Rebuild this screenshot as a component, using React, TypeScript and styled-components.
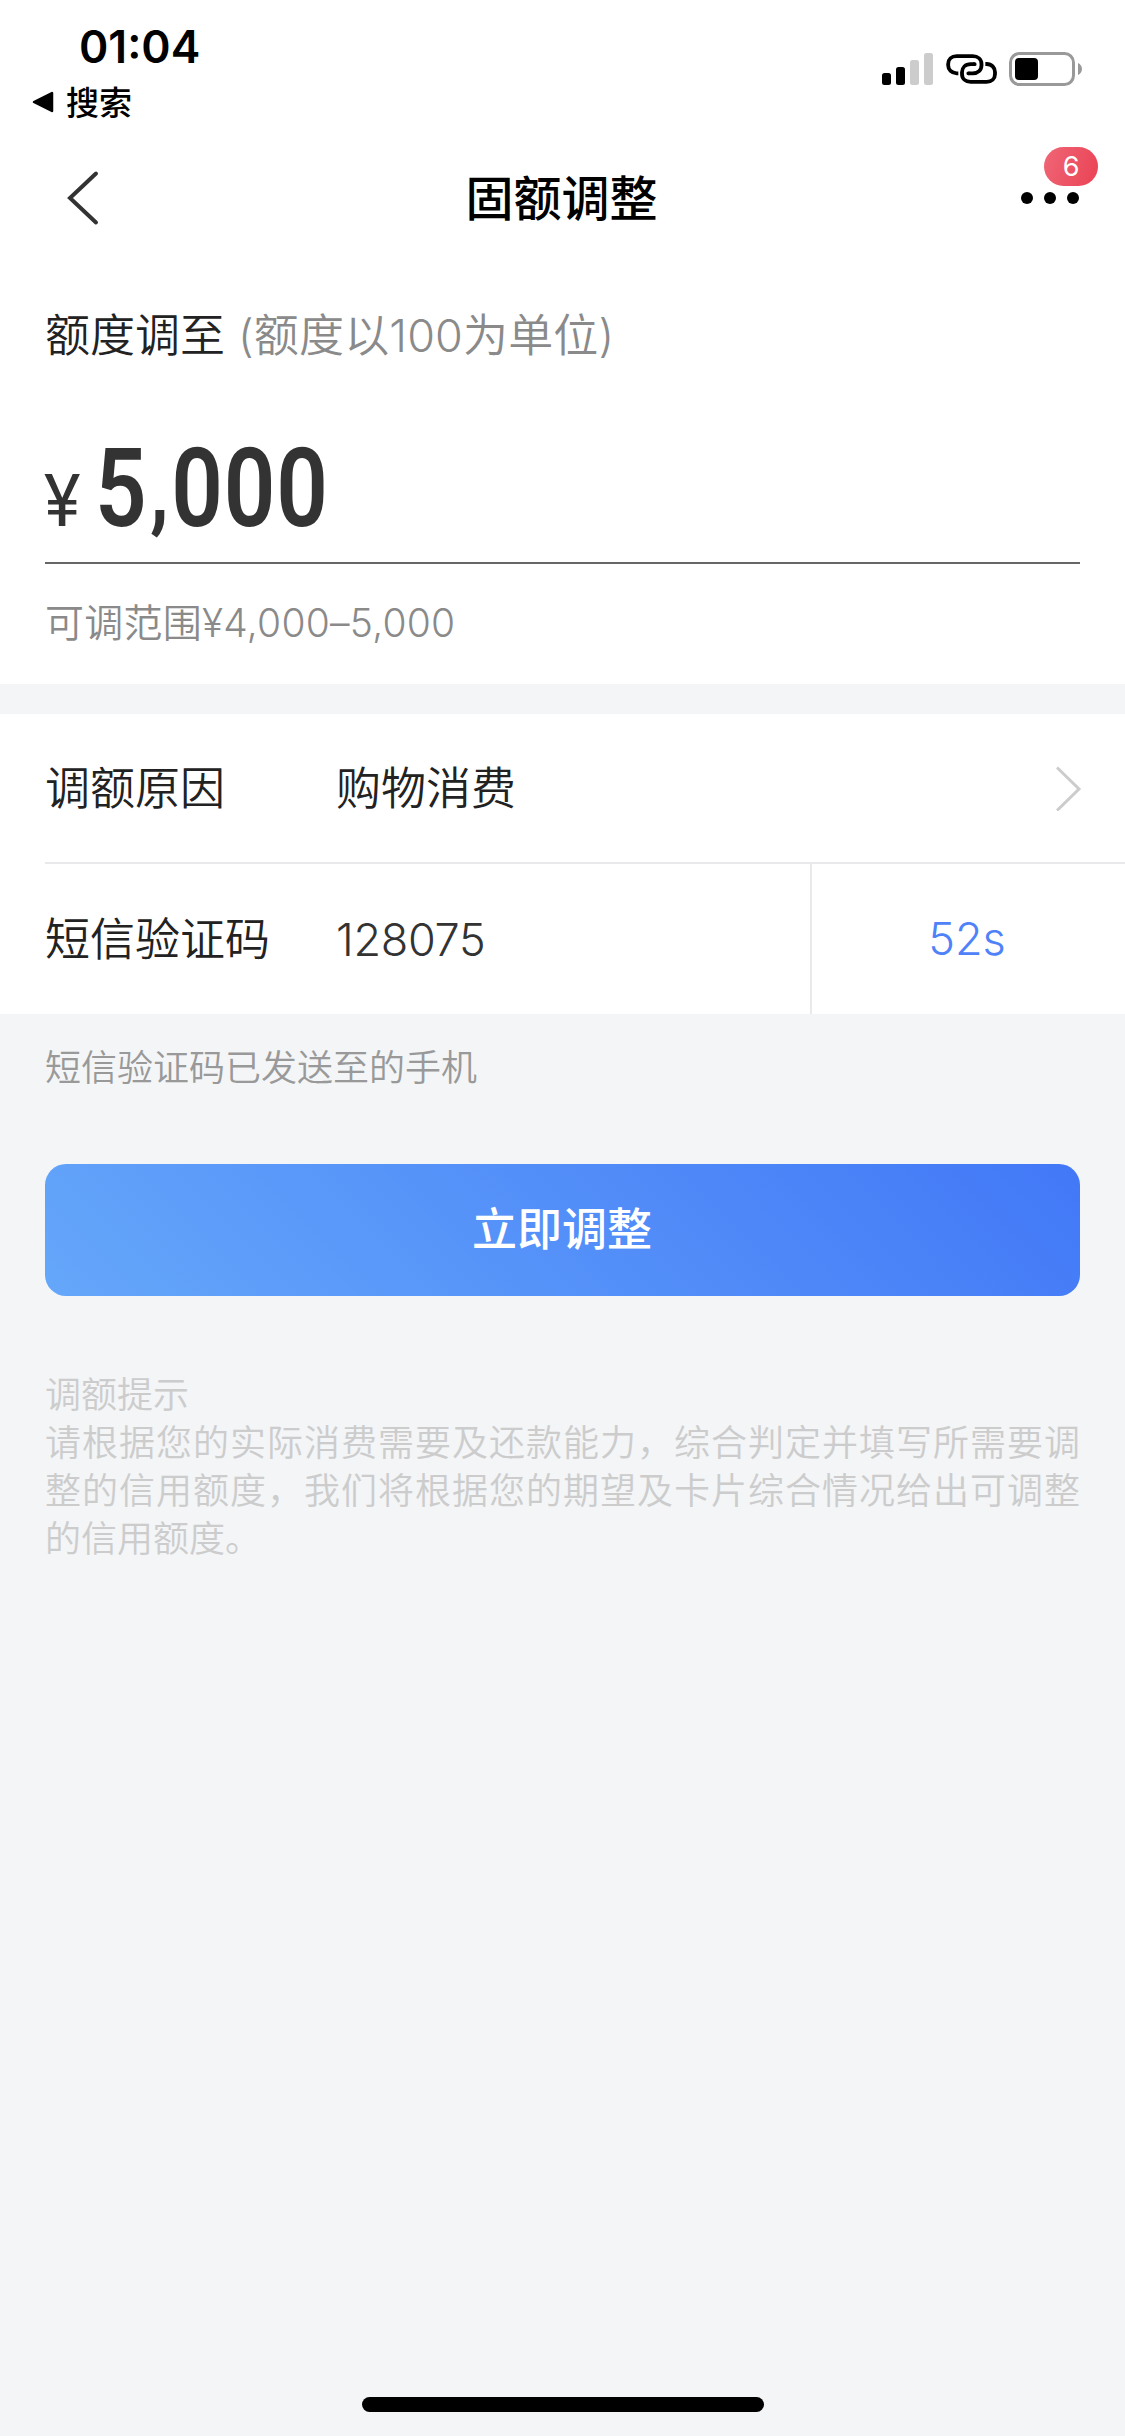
import React from "react";
import styled, { createGlobalStyle } from "styled-components";

const GlobalStyle = createGlobalStyle`
  * { box-sizing: border-box; }
  body {
    margin: 0;
    background: #f3f5f7;
    font-family: Inter, "Noto Sans CJK SC", sans-serif;
    color: #222;
  }
`;

const Screen = styled.main`
  display: flex;
  flex-direction: column;
  width: 1125px;
  height: 2436px;
  background: #f3f5f7;
  overflow: hidden;
`;

const StatusBar = styled.header`
  display: flex;
  justify-content: space-between;
  height: 132px;
  padding: 25px 42px 0 32px;
  background: #fff;
  color: #000;
`;

const StatusLeft = styled.div`
  display: flex;
  flex-direction: column;
`;

const Clock = styled.div`
  padding-left: 47px;
  font-size: 44.5px;
  font-weight: 600;
  line-height: 44px;
`;

const BackToApp = styled.div`
  display: flex;
  align-items: center;
  gap: 12px;
  height: 40px;
  margin-top: 13px;
  font: 500 33px/38px "Noto Sans CJK SC", sans-serif;
`;

const BackToAppLabel = styled.span`
  margin-bottom: 3px;
`;

const StatusIcons = styled.div`
  display: flex;
  align-items: flex-start;
  gap: 12px;
  padding-top: 27px;
`;

const NavBar = styled.nav`
  display: grid;
  grid-template-columns: 1fr auto 1fr;
  align-items: center;
  height: 132px;
  padding: 0 46px 0 66px;
  background: #fff;
`;

const BackButton = styled.button`
  display: flex;
  width: 34px;
  padding: 0;
  border: 0;
  background: none;
`;

const Title = styled.h1`
  margin: 0 0 6px -22px;
  font: 500 48px/72px "Noto Sans CJK SC", sans-serif;
  color: #000;
`;

const MoreButton = styled.div`
  position: relative;
  display: flex;
  justify-self: end;
  gap: 11px;
`;

const Dot = styled.i`
  width: 12px;
  height: 12px;
  border-radius: 50%;
  background: #000;
`;

const Badge = styled.span`
  position: absolute;
  left: 23px;
  top: -45px;
  width: 54px;
  height: 39px;
  border-radius: 20px;
  background: linear-gradient(110deg, #ef6676, #ea4355);
  color: #fff;
  font-size: 27px;
  line-height: 39px;
  text-align: center;
`;

const AmountPanel = styled.section`
  display: flex;
  flex-direction: column;
  height: 420px;
  padding: 41px 45px 0;
  background: #fff;
`;

const Text = styled.span<{ $size: number; $color?: string; $spacing?: number }>`
  font-size: ${(p) => p.$size}px;
  line-height: ${(p) => Math.round(p.$size * 1.35)}px;
  color: ${(p) => p.$color ?? "#222"};
  letter-spacing: ${(p) => p.$spacing ?? 0}px;
  font-weight: 350;
  white-space: pre;
`;

const AmountLabel = styled.div`
  display: flex;
  align-items: center;
  gap: 13px;
  height: 61px;
`;

const AmountField = styled.div`
  display: flex;
  align-items: baseline;
  height: 198px;
  padding-top: 63px;
  border-bottom: 2px solid #666;
  font-family: Roboto, sans-serif;
  color: #333;
`;

const Currency = styled.span`
  width: 51px;
  margin-left: -1px;
  font-size: 73px;
  font-weight: 400;
  transform: scaleX(0.95);
  transform-origin: left;
`;

const Amount = styled.span`
  font-size: 109px;
  line-height: 120px;
  font-weight: 600;
  letter-spacing: 1px;
  transform: scaleX(0.83);
  transform-origin: left;
`;

const Comma = styled.span`
  font-size: 96px;
  line-height: 1;
  vertical-align: 5px;
  padding: 0 2px 0 3px;
`;

const RangeRow = styled.div`
  display: flex;
  align-items: center;
  height: 116px;
`;

const Form = styled.section`
  display: flex;
  flex-direction: column;
  height: 300px;
  margin-top: 30px;
  padding-left: 45px;
  background: #fff;
`;

const FormRow = styled.div`
  display: flex;
  align-items: center;
  height: 150px;
  &:first-child {
    padding-right: 43px;
    border-bottom: 2px solid #e9e9eb;
  }
`;

const FormLabel = styled.div`
  width: 291px;
`;

const FormValue = styled.div`
  flex: 1;
`;

const Countdown = styled.div`
  display: flex;
  align-items: center;
  justify-content: center;
  width: 315px;
  height: 150px;
  padding: 0 3px 2px 0;
  border-left: 2px solid #e9e9eb;
`;

const SentNote = styled.div`
  display: flex;
  align-items: center;
  height: 108px;
  padding-left: 45px;
`;

const SubmitButton = styled.button`
  height: 132px;
  margin: 42px 45px 0;
  padding: 0 1px 6px 0;
  border: 0;
  border-radius: 21px;
  background: linear-gradient(45deg, #65a7fa, #4278f7);
  color: #fff;
  font: 500 45px/126px "Noto Sans CJK SC", sans-serif;
`;

const Tips = styled.section`
  margin: 72px 45px 0;
  font: 350 36px/48px "Noto Sans CJK SC", sans-serif;
  color: #ccc;
`;

const TipsTitle = styled.h2`
  margin: 0;
  font: inherit;
`;

const TipsBody = styled.p`
  margin: 0;
  text-align: justify;
`;

const HomeIndicator = styled.div`
  width: 402px;
  height: 15px;
  margin: auto auto 24px 362px;
  border-radius: 8px;
  background: #000;
`;

const SignalIcon = () => (
  <svg width="52" height="33" viewBox="0 0 52 33">
    <rect x="0" y="21" width="9" height="12" rx="2.5" fill="#000" />
    <rect x="14" y="15" width="9" height="18" rx="2.5" fill="#000" />
    <rect x="28" y="8" width="9" height="25" rx="2.5" fill="#ccc" />
    <rect x="42" y="1" width="9" height="32" rx="2.5" fill="#ccc" />
  </svg>
);

const LinkIcon = () => (
  <svg width="51" height="34" viewBox="317 97 153 102" fill="none" stroke="#000" strokeWidth="11.5">
    <path d="M354 161H349C334 161 323.500 150 323.500 137V133C323.500 119 333 109.500 349 109.500H397C413 109.500 423.500 119 423.500 133V137C423.500 151 413 161 397 161H385" />
    <path d="M435 133H439C454 133 464 144 464 158V163C464 177 454 186.500 439 186.500H391C375 186.500 365 177 365 163V158C365 144 375 133.500 391 133.500H403" />
    <path d="M385 161H384M402 133.500H403" strokeLinecap="round" />
  </svg>
);

const BatteryIcon = () => (
  <svg width="74" height="34" viewBox="0 0 74 34">
    <rect x="1.500" y="1.500" width="63" height="31" rx="9" fill="#fff" stroke="#999" strokeWidth="3" />
    <rect x="6" y="6" width="23" height="22" rx="4" fill="#000" />
    <path d="M69 11C71.500 12 73 14.500 73 17S71.500 22 69 23Z" fill="#999" />
  </svg>
);

export default function App() {
  return (
    <Screen>
      <GlobalStyle />
      <StatusBar>
        <StatusLeft>
          <Clock>01:04</Clock>
          <BackToApp>
            <svg width="22" height="22" viewBox="0 0 22 22">
              <path d="M2 11L20 2V20Z" fill="#000" stroke="#000" strokeWidth="2.500" strokeLinejoin="round" />
            </svg>
            <BackToAppLabel>搜索</BackToAppLabel>
          </BackToApp>
        </StatusLeft>
        <StatusIcons>
          <SignalIcon />
          <LinkIcon />
          <BatteryIcon />
        </StatusIcons>
      </StatusBar>

      <NavBar>
        <BackButton aria-label="返回">
          <svg width="34" height="56" viewBox="0 0 34 56" fill="none" stroke="#333" strokeWidth="4" strokeLinecap="round">
            <path d="M30 3.500L4 28L30 52.500" />
          </svg>
        </BackButton>
        <Title>固额调整</Title>
        <MoreButton>
          <Dot />
          <Dot />
          <Dot />
          <Badge>6</Badge>
        </MoreButton>
      </NavBar>

      <AmountPanel>
        <AmountLabel>
          <Text $size={45}>额度调至</Text>
          <Text $size={45} $color="#8a8a8a" $spacing={0.15}>(额度以100为单位)</Text>
        </AmountLabel>
        <AmountField>
          <Currency>¥</Currency>
          <Amount>5<Comma>,</Comma>000</Amount>
        </AmountField>
        <RangeRow>
          <Text $size={39} $color="#8a8a8a" $spacing={0.25}>可调范围¥4,000–5,000</Text>
        </RangeRow>
      </AmountPanel>

      <Form>
        <FormRow>
          <FormLabel><Text $size={45}>调额原因</Text></FormLabel>
          <FormValue><Text $size={45}>购物消费</Text></FormValue>
          <svg width="26" height="46" viewBox="0 0 26 46" fill="none" stroke="#ccc" strokeWidth="3">
            <path d="M1 2.500L23 24L1 45.500" />
          </svg>
        </FormRow>
        <FormRow>
          <FormLabel><Text $size={45}>短信验证码</Text></FormLabel>
          <FormValue><Text $size={45} $color="#333" $spacing={-0.3}>128075</Text></FormValue>
          <Countdown><Text $size={45} $color="#4f82f8">52s</Text></Countdown>
        </FormRow>
      </Form>

      <SentNote><Text $size={36} $color="#999">短信验证码已发送至的手机</Text></SentNote>
      <SubmitButton>立即调整</SubmitButton>

      <Tips>
        <TipsTitle>调额提示</TipsTitle>
        <TipsBody>
          请根据您的实际消费需要及还款能力，综合判定并填写所需要调整的信用额度，我们将根据您的期望及卡片综合情况给出可调整的信用额度。
        </TipsBody>
      </Tips>
      <HomeIndicator />
    </Screen>
  );
}
